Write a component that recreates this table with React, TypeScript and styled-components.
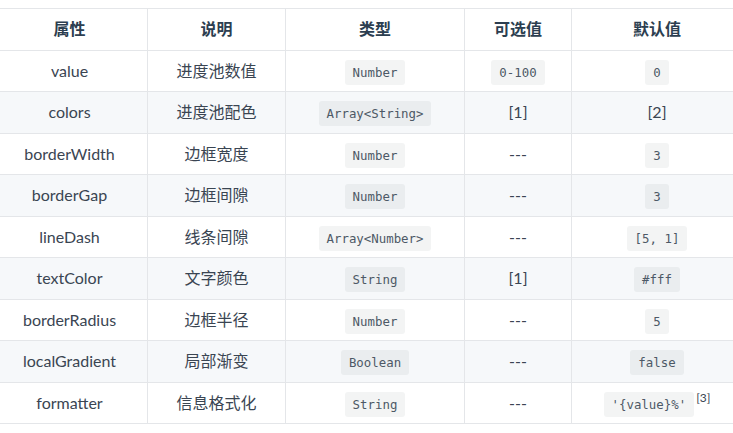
import React from 'react'
import styled, { createGlobalStyle } from 'styled-components';

const GlobalStyle = createGlobalStyle`
  html, body {
    margin: 0;
    padding: 0;
    background: #fff;
  }
`;

const Page = styled.div`
  width: 733px;
  height: 433px;
  overflow: hidden;
  padding-top: 8px;
  box-sizing: border-box;
  font-family: "Lato", "Noto Sans CJK SC", sans-serif;
  color: #2c3e50;
`;

const Table = styled.table`
  margin-left: -9px;
  width: 751px;
  table-layout: fixed;
  border-collapse: collapse;
  font-size: 16px;
`;

const HeadCell = styled.th`
  border: 1px solid #e4e6e9;
  padding: 9px 16px;
  line-height: 22.5px;
  font-weight: 700;
  text-align: center;
`;

const Row = styled.tr<{ $striped: boolean }>`
  background: ${({ $striped }) => ($striped ? '#f6f8fa' : '#fff')};
`;

const Cell = styled.td`
  border: 1px solid #e4e6e9;
  padding: 9px 16px;
  line-height: 22.5px;
  text-align: center;
  white-space: nowrap;
  color: #3a4552;
`;

const Code = styled.code`
  font-family: "DejaVu Sans Mono", "Liberation Mono", monospace;
  font-size: 12.4px;
  line-height: 16px;
  color: #4d5966;
  background: rgba(27, 31, 35, 0.05);
  padding: 5px 8px;
  border-radius: 3px;
`;

const Note = styled.sup`
  font-size: 12px;
  line-height: 0;
  margin-left: 2px;
`;

type Val = { code?: string; text?: string; note?: string };

type Prop = {
  name: string;
  desc: string;
  type: string;
  options: Val;
  def: Val;
};

const props: Prop[] = [
  { name: 'value', desc: '进度池数值', type: 'Number', options: { code: '0-100' }, def: { code: '0' } },
  { name: 'colors', desc: '进度池配色', type: 'Array<String>', options: { text: '[1]' }, def: { text: '[2]' } },
  { name: 'borderWidth', desc: '边框宽度', type: 'Number', options: { text: '---' }, def: { code: '3' } },
  { name: 'borderGap', desc: '边框间隙', type: 'Number', options: { text: '---' }, def: { code: '3' } },
  { name: 'lineDash', desc: '线条间隙', type: 'Array<Number>', options: { text: '---' }, def: { code: '[5, 1]' } },
  { name: 'textColor', desc: '文字颜色', type: 'String', options: { text: '[1]' }, def: { code: '#fff' } },
  { name: 'borderRadius', desc: '边框半径', type: 'Number', options: { text: '---' }, def: { code: '5' } },
  { name: 'localGradient', desc: '局部渐变', type: 'Boolean', options: { text: '---' }, def: { code: 'false' } },
  { name: 'formatter', desc: '信息格式化', type: 'String', options: { text: '---' }, def: { code: "'{value}%'", note: '[3]' } },
];

const ValueCell = ({ value }: { value: Val }) => (
  <Cell>
    {value.code ? <Code>{value.code}</Code> : value.text}
    {value.note && <Note>{value.note}</Note>}
  </Cell>
);

const App = () => {
  return (
    <>
      <GlobalStyle />
      <Page>
        <Table>
          <colgroup>
            <col style={{ width: 156 }} />
            <col style={{ width: 138 }} />
            <col style={{ width: 179 }} />
            <col style={{ width: 107 }} />
            <col style={{ width: 171 }} />
          </colgroup>
          <thead>
            <tr>
              <HeadCell>属性</HeadCell>
              <HeadCell>说明</HeadCell>
              <HeadCell>类型</HeadCell>
              <HeadCell>可选值</HeadCell>
              <HeadCell>默认值</HeadCell>
            </tr>
          </thead>
          <tbody>
            {props.map((p, i) => (
              <Row key={p.name} $striped={i % 2 === 1}>
                <Cell>{p.name}</Cell>
                <Cell>{p.desc}</Cell>
                <Cell><Code>{p.type}</Code></Cell>
                <ValueCell value={p.options} />
                <ValueCell value={p.def} />
              </Row>
            ))}
          </tbody>
        </Table>
      </Page>
    </>
  )
}

export default App
